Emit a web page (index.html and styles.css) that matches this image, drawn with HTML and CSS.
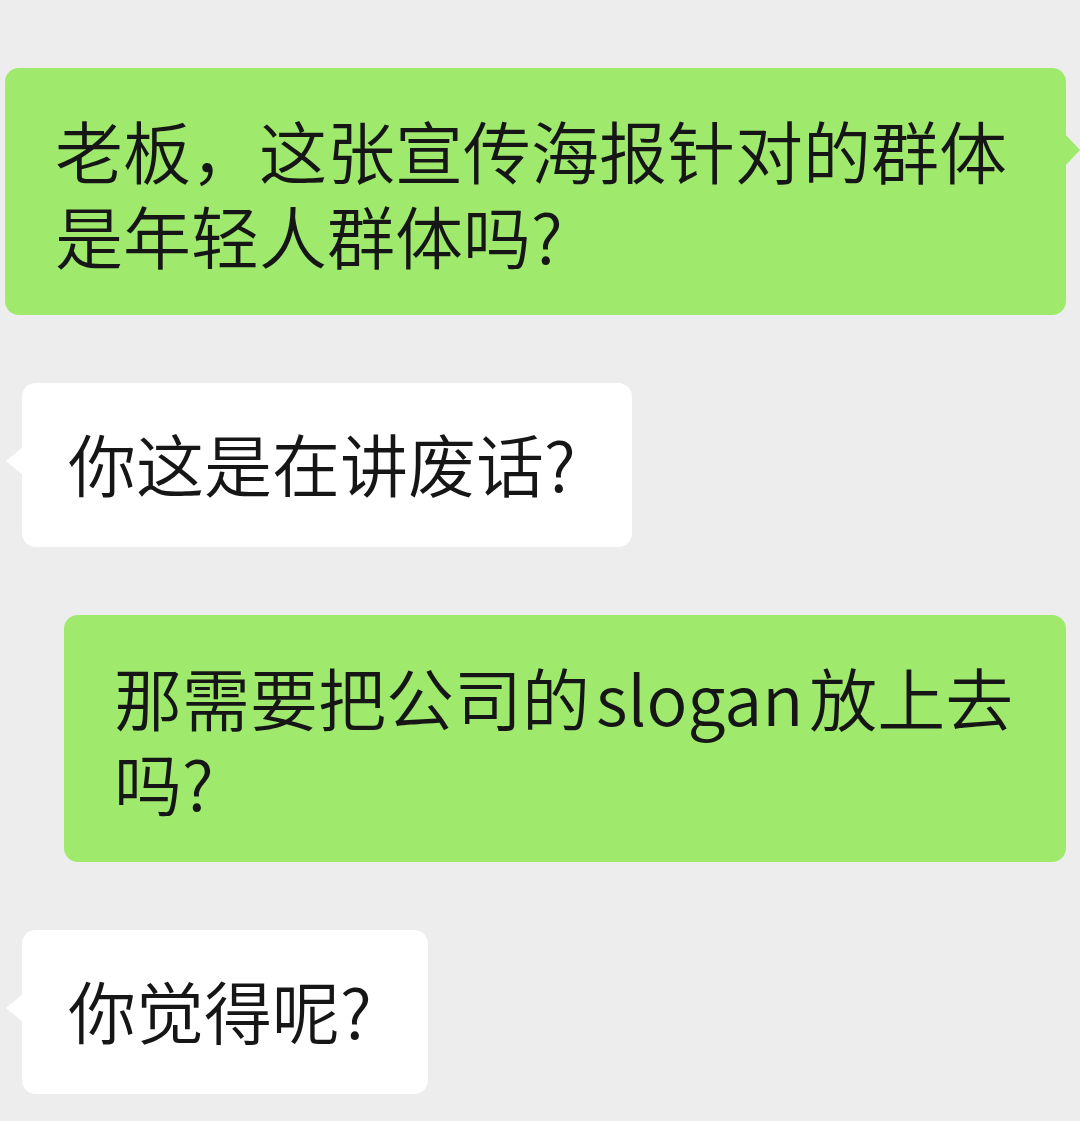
FILE: index.html
```html
<!DOCTYPE html>
<html>
<head>
	<meta charset="utf-8">
	<meta name="viewport" content="width=device-width, initial-scale=1">
	<title>聊天记录</title>
	<link rel="stylesheet" href="styles.css">
</head>
<body>
	<div class="chat">
		<div class="row right">
			<div class="bubble green first">老板，这张宣传海报针对的群体是年轻人群体吗?</div>
		</div>
		<div class="row left">
			<div class="bubble white">你这是在讲废话?</div>
		</div>
		<div class="row right">
			<div class="bubble green third">那需要把公司的<span class="latin">slogan</span>放上去<br>吗?</div>
		</div>
		<div class="row left">
			<div class="bubble white">你觉得呢?</div>
		</div>
	</div>
</body>
</html>
```

FILE: styles.css
```css
body {
	margin: 0;
	background: #ededed;
	font-family: "Noto Sans CJK SC", "Noto Sans", sans-serif;
	color: #161616;
}
.chat {
	display: flex;
	flex-direction: column;
	gap: 68px;
	padding-top: 68px;
}
.row {
	display: flex;
}
.row.right {
	justify-content: flex-end;
	padding-right: 14px;
}
.row.left {
	justify-content: flex-start;
	padding-left: 22px;
}
.bubble {
	position: relative;
	font-size: 68px;
	font-weight: 350;
	line-height: 85px;
	border-radius: 14px;
	padding: 37px 56px 42px 46px;
}
.bubble.green {
	background: #9fea6c;
	padding: 39px 50px 38px 50px;
	box-sizing: border-box;
}
.bubble.first {
	width: 1061px;
}
.bubble.third {
	width: 1002px;
	padding-right: 40px;
}
.bubble.white {
	background: #ffffff;
}
.latin {
	padding: 0 6px;
}
.bubble.first::after {
	content: "";
	position: absolute;
	right: -14px;
	top: 66px;
	border-left: 15px solid #9fea6c;
	border-top: 16px solid transparent;
	border-bottom: 16px solid transparent;
}
.bubble.white::before {
	content: "";
	position: absolute;
	left: -16px;
	top: 64px;
	border-right: 17px solid #ffffff;
	border-top: 14px solid transparent;
	border-bottom: 14px solid transparent;
}
```
